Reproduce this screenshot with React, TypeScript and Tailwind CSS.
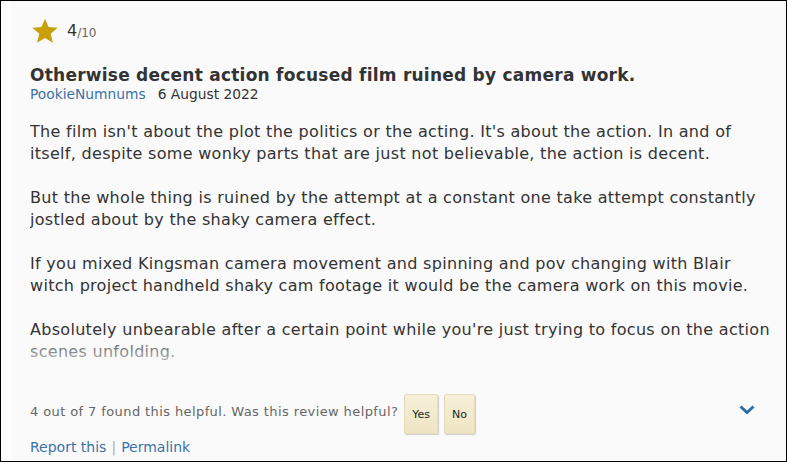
import React from "react";

const paragraphs = [
  "The film isn't about the plot the politics or the acting. It's about the action. In and of itself, despite some wonky parts that are just not believable, the action is decent.",
  "But the whole thing is ruined by the attempt at a constant one take attempt constantly jostled about by the shaky camera effect.",
  "If you mixed Kingsman camera movement and spinning and pov changing with Blair witch project handheld shaky cam footage it would be the camera work on this movie.",
  "Absolutely unbearable after a certain point while you're just trying to focus on the action scenes unfolding.",
];

function Star() {
  return (
    <svg width="26" height="26" viewBox="0 0 24 24" className="block">
      <path
        d="M12 .6l3.3 7.7 8.4.7-6.4 5.5 2 8.3L12 18.4l-7.3 4.4 2-8.3L.3 9l8.4-.7z"
        fill="#c8a00c"
      />
    </svg>
  );
}

function Chevron() {
  return (
    <svg width="16" height="10" viewBox="0 0 16 10" className="block">
      <path d="M1.5 1.5L8 7.5l6.5-6" fill="none" stroke="#2f6da4" strokeWidth="3" />
    </svg>
  );
}

function VoteButton({ label }: { label: string }) {
  return (
    <button className="h-[40px] px-[7px] rounded-[2px] bg-gradient-to-b from-[#f6f0d9] to-[#efe5c3] border border-[#e6dcbc] shadow-[1px_1px_1px_rgba(0,0,0,0.18)] text-[11px] text-[#222] leading-none">
      {label}
    </button>
  );
}

export default function App() {
  return (
    <div
      className="w-[787px] h-[462px] border border-black bg-white overflow-hidden"
      style={{ fontFamily: '"DejaVu Sans", Verdana, sans-serif' }}
    >
      <div className="ml-[10px] h-full bg-[#fafafa] pl-[19px] pr-[11px] pt-[17px] flex flex-col">
        <div className="flex items-center h-[26px]">
          <div className="ml-[2px]">
            <Star />
          </div>
          <span className="ml-[9px] text-[16px] text-[#333] leading-none">4</span>
          <span className="text-[12px] text-[#666] leading-none mt-[3px]">/10</span>
        </div>

        <h2 className="mt-[21px] text-[17px] tracking-[0.24px] font-bold text-[#333] leading-[20px]">
          Otherwise decent action focused film ruined by camera work.
        </h2>
        <div className="text-[13.8px] leading-[18px] flex">
          <span className="text-[#3a72a8]">PookieNumnums</span>
          <span className="ml-[12px] text-[#333]">6 August 2022</span>
        </div>

        <div className="relative mt-[18px] h-[242px] overflow-hidden">
          <div className="text-[16px] tracking-[0.3px] leading-[22px] text-[#333]">
            {paragraphs.map((p, i) => (
              <p key={i} className={i > 0 ? "mt-[22px]" : ""}>
                {p}
              </p>
            ))}
          </div>
          <div className="absolute left-0 right-0 bottom-0 h-[30px] bg-gradient-to-b from-[rgba(250,250,250,0)] to-[rgba(250,250,250,0.7)]" />
        </div>

        <div className="mt-[31px] flex items-start">
          <span className="mt-[9px] text-[13px] leading-[18px] tracking-[0.4px] text-[#666]">
            4 out of 7 found this helpful. Was this review helpful?
          </span>
          <div className="ml-[6px] flex gap-[6px]">
            <VoteButton label="Yes" />
            <VoteButton label="No" />
          </div>
          <div className="ml-auto mr-[20px] mt-[11px]">
            <Chevron />
          </div>
        </div>

        <div className="mt-[4px] text-[14px] leading-[18px]">
          <span className="text-[#3a72a8]">Report this</span>
          <span className="text-[#aaa] mx-[5px]">|</span>
          <span className="text-[#3a72a8]">Permalink</span>
        </div>
      </div>
    </div>
  );
}
